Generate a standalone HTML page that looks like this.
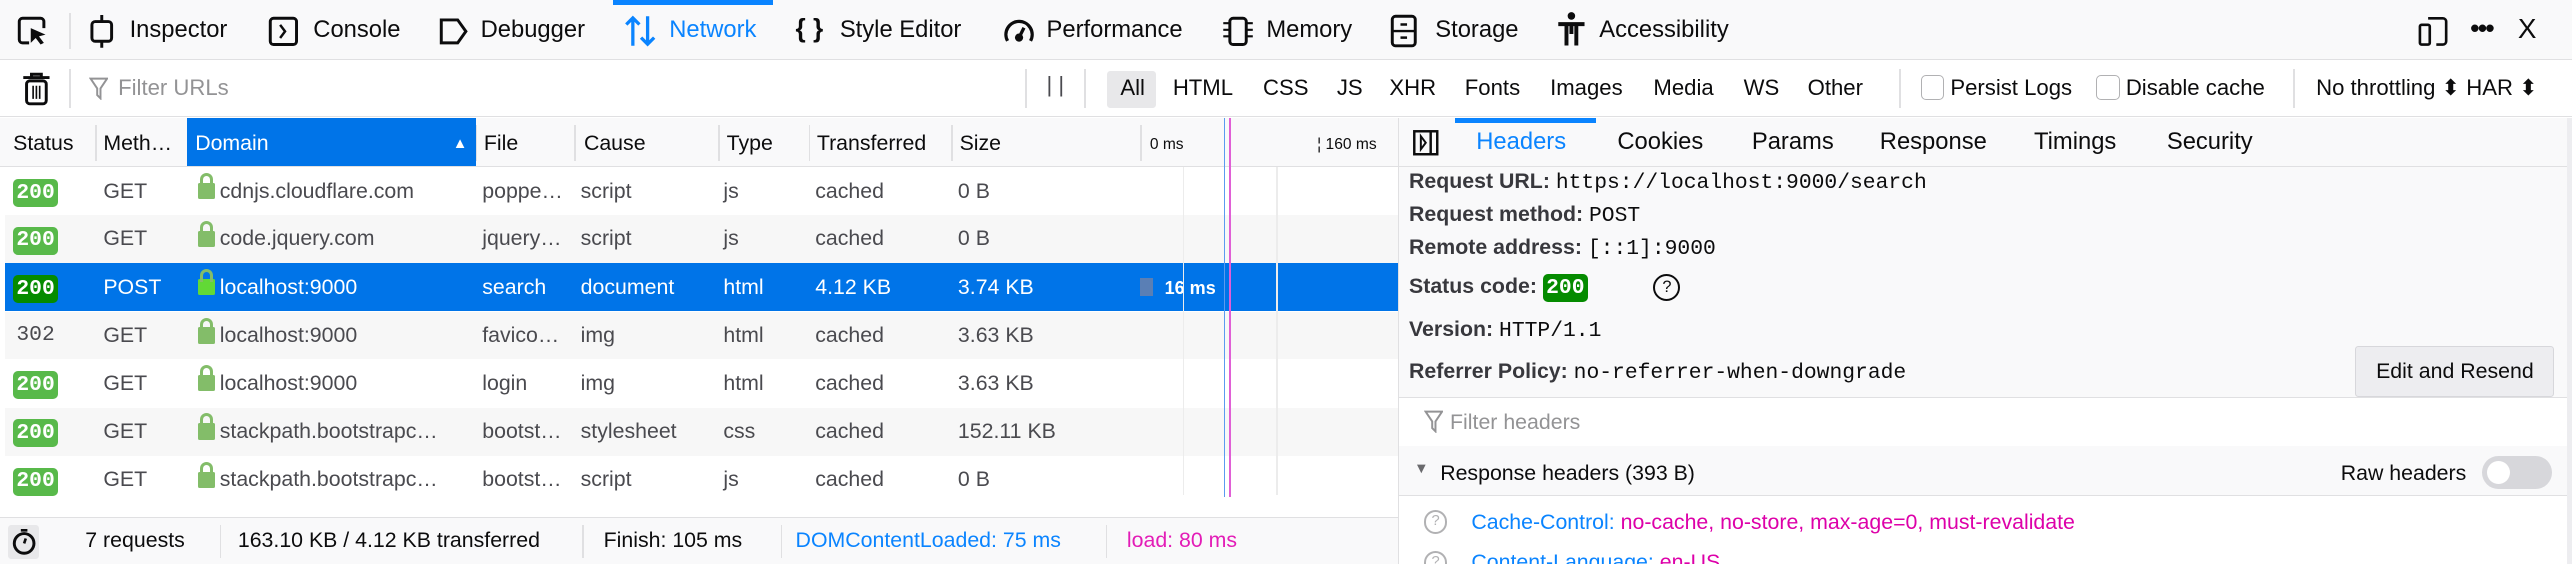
<!DOCTYPE html>
<html><head><meta charset="utf-8"><style>
html,body{margin:0;padding:0;overflow:hidden;background:#fff}
#root{zoom:1.64031;width:1568px;height:344px;position:relative;font-family:"Liberation Sans",sans-serif;font-size:13px;color:#0c0c0d;overflow:hidden}
.a{position:absolute;white-space:nowrap}
.tb{top:0;left:0;width:1568px;height:36px;background:#f9f9fa;border-bottom:1px solid #e0e0e2}
.tab{top:10px;font-size:14.5px;color:#0c0c0d}
.fb{top:37px;left:0;width:1568px;height:34px;background:#fff;border-bottom:1px solid #e0e0e2}
.ft{top:46px;font-size:13.5px}
.hdr{top:72px;left:0;width:852px;height:29px;background:#f9f9fa;border-bottom:1px solid #e0e0e2}
.hc{top:80px;font-size:13px;color:#0c0c0d}
.row{left:3px;width:849px;height:29.4px}
.row span{position:absolute;top:7px;color:#4a4a4f}
.b200{display:inline-block;background:#58b94a;color:#fff;font-family:"Liberation Mono",monospace;font-weight:bold;border-radius:3px;padding:1px 2px;font-size:13px;line-height:15px}
.lock{display:inline-block;width:10px;height:10px;background:#83bd69;border-radius:1px;position:relative;margin-right:3px;top:1px}
.lock:before{content:"";position:absolute;left:1px;top:-6px;width:4px;height:6px;border:2px solid #83bd69;border-bottom:none;border-radius:4px 4px 0 0}
.mono{font-family:"Liberation Mono",monospace}
.rp{left:853px;width:715px}
.lbl{font-weight:bold;color:#38383d}
</style></head><body><div id="root">
<div class="a tb"></div>
<div class="a" style="left:374px;top:0;width:97px;height:3px;background:#0a84ff"></div>
<svg class="a" style="left:10px;top:9px" width="20" height="20" viewBox="0 0 20 20"><path d="M8 17H4a2 2 0 0 1-2-2V4a2 2 0 0 1 2-2h11a2 2 0 0 1 2 2v4" fill="none" stroke="#0c0c0d" stroke-width="1.8"/><path d="M9 8l9 4-4 1 3 4-2 1-3-4-3 3z" fill="#0c0c0d"/></svg>
<div class="a" style="left:42px;top:8px;width:1px;height:22px;background:#e0e0e2"></div>
<svg class="a" style="left:53px;top:9px" width="18" height="20"><rect x="3" y="4" width="12" height="12" rx="2" fill="none" stroke="#0c0c0d" stroke-width="1.8"/><path d="M9 0v4M9 16v4" stroke="#0c0c0d" stroke-width="1.8"/></svg>
<div class="a tab" style="left:79px">Inspector</div>
<svg class="a" style="left:163px;top:9px" width="20" height="20"><rect x="2" y="2" width="16" height="16" rx="2" fill="none" stroke="#0c0c0d" stroke-width="1.8"/><path d="M8 6l3 4-3 4" fill="none" stroke="#0c0c0d" stroke-width="1.5"/></svg>
<div class="a tab" style="left:191px">Console</div>
<svg class="a" style="left:267px;top:9px" width="20" height="20"><path d="M2 3h10l5 7-5 7H2z" fill="none" stroke="#0c0c0d" stroke-width="1.8"/></svg>
<div class="a tab" style="left:293px">Debugger</div>
<svg class="a" style="left:380px;top:8px" width="22" height="22"><path d="M6 20V3M2 7l4-4 4 4M15 2v17M11 15l4 4 4-4" fill="none" stroke="#0a84ff" stroke-width="2"/></svg>
<div class="a tab" style="left:408px;color:#0a84ff">Network</div>
<div class="a tab" style="left:485px;font-weight:bold;font-size:16px;top:8px">{ }</div>
<div class="a tab" style="left:512px">Style Editor</div>
<svg class="a" style="left:610px;top:8px" width="22" height="22"><path d="M4 17A8 8 0 1 1 18 17" fill="none" stroke="#0c0c0d" stroke-width="2"/><circle cx="11" cy="15" r="2.5" fill="#0c0c0d"/><path d="M11 15l3-6" stroke="#0c0c0d" stroke-width="2"/></svg>
<div class="a tab" style="left:638px">Performance</div>
<svg class="a" style="left:744px;top:9px" width="22" height="20"><rect x="6" y="2" width="10" height="16" rx="2" fill="none" stroke="#0c0c0d" stroke-width="1.8"/><path d="M2 5h4M2 9h4M2 13h4M16 5h4M16 9h4M16 13h4" stroke="#0c0c0d" stroke-width="1.3"/></svg>
<div class="a tab" style="left:772px">Memory</div>
<svg class="a" style="left:847px;top:8px" width="18" height="22"><rect x="2" y="2" width="14" height="18" rx="2" fill="none" stroke="#0c0c0d" stroke-width="1.8"/><path d="M2 11h14M7 7h4M7 15h4" stroke="#0c0c0d" stroke-width="1.5"/></svg>
<div class="a tab" style="left:875px">Storage</div>
<svg class="a" style="left:948px;top:7px" width="20" height="22"><circle cx="10" cy="3" r="2.3" fill="#0c0c0d"/><path d="M2 8h16M10 7v7M7 8v13M13 8v13" stroke="#0c0c0d" stroke-width="2.4"/></svg>
<div class="a tab" style="left:975px">Accessibility</div>
<svg class="a" style="left:1472px;top:9px" width="22" height="20"><rect x="3" y="6" width="6" height="12" rx="1" fill="none" stroke="#0c0c0d" stroke-width="1.6"/><path d="M8 2h9a2 2 0 0 1 2 2v12a2 2 0 0 1-2 2h-4" fill="none" stroke="#0c0c0d" stroke-width="1.6"/></svg>
<div class="a" style="left:1506px;top:8px;font-size:16px;font-weight:bold;letter-spacing:-1px">•••</div>
<div class="a" style="left:1535px;top:8px;font-size:17px">X</div>

<div class="a fb"></div>
<svg class="a" style="left:12px;top:43px" width="20" height="22"><path d="M2 4h16M7 4V2h6v2" stroke="#0c0c0d" stroke-width="1.8" fill="none"/><rect x="4" y="6" width="12" height="14" rx="2" fill="none" stroke="#0c0c0d" stroke-width="1.8"/><path d="M8 9v8M10 9v8M12 9v8" stroke="#0c0c0d" stroke-width="1"/></svg>
<div class="a" style="left:42px;top:42px;width:1px;height:24px;background:#e0e0e2"></div>
<svg class="a" style="left:54px;top:47px" width="12" height="14"><path d="M1 1h10L7 7v6L5 11V7z" fill="none" stroke="#939395" stroke-width="1.2"/></svg>
<div class="a ft" style="left:72px;color:#939395">Filter URLs</div>
<div class="a" style="left:625px;top:42px;width:1px;height:24px;background:#e0e0e2"></div>
<div class="a ft" style="left:638px;top:44px;color:#4a4a4f">| |</div>
<div class="a" style="left:661px;top:42px;width:1px;height:24px;background:#e0e0e2"></div>
<div class="a" style="left:675px;top:43px;width:30px;height:23px;background:#e8e8ea;border-radius:2px"></div>
<div class="a ft" style="left:683px">All</div>
<div class="a ft" style="left:715px">HTML</div>
<div class="a ft" style="left:770px">CSS</div>
<div class="a ft" style="left:815px">JS</div>
<div class="a ft" style="left:847px">XHR</div>
<div class="a ft" style="left:893px">Fonts</div>
<div class="a ft" style="left:945px">Images</div>
<div class="a ft" style="left:1008px">Media</div>
<div class="a ft" style="left:1063px">WS</div>
<div class="a ft" style="left:1102px">Other</div>
<div class="a" style="left:1158px;top:42px;width:1px;height:24px;background:#e0e0e2"></div>
<div class="a" style="left:1171px;top:46px;width:13px;height:14px;border:1px solid #b1b1b3;border-radius:3px;background:#fff"></div>
<div class="a ft" style="left:1189px">Persist Logs</div>
<div class="a" style="left:1278px;top:46px;width:13px;height:14px;border:1px solid #b1b1b3;border-radius:3px;background:#fff"></div>
<div class="a ft" style="left:1296px">Disable cache</div>
<div class="a" style="left:1398px;top:42px;width:1px;height:24px;background:#e0e0e2"></div>
<div class="a ft" style="left:1412px">No throttling ⬍ HAR ⬍</div>

<div class="a hdr"></div>
<div class="a" style="left:114px;top:72px;width:176px;height:29px;background:#0074e8"></div>
<div class="a hc" style="left:8px">Status</div>
<div class="a hc" style="left:63px">Meth…</div>
<div class="a hc" style="left:119px;color:#fff">Domain</div>
<div class="a hc" style="left:276px;color:#fff;font-size:9px;top:83px">▲</div>
<div class="a hc" style="left:295px">File</div>
<div class="a hc" style="left:356px">Cause</div>
<div class="a hc" style="left:443px">Type</div>
<div class="a hc" style="left:498px">Transferred</div>
<div class="a hc" style="left:585px">Size</div>
<div class="a hc" style="left:701px;font-size:9.5px;top:83px">0 ms</div>
<div class="a hc" style="left:803px;font-size:9.5px;top:83px">¦ 160 ms</div>
<div class="a" style="left:58px;top:76px;width:1px;height:22px;background:#e0e0e2"></div>
<div class="a" style="left:290px;top:76px;width:1px;height:22px;background:#e0e0e2"></div>
<div class="a" style="left:350px;top:76px;width:1px;height:22px;background:#e0e0e2"></div>
<div class="a" style="left:438px;top:76px;width:1px;height:22px;background:#e0e0e2"></div>
<div class="a" style="left:493px;top:76px;width:1px;height:22px;background:#e0e0e2"></div>
<div class="a" style="left:580px;top:76px;width:1px;height:22px;background:#e0e0e2"></div>
<div class="a" style="left:695px;top:76px;width:1px;height:22px;background:#e0e0e2"></div>

<div class="a row" style="top:102px;background:#fff"><span style="left:5px"><b class="b200">200</b></span><span style="left:60px">GET</span><span style="left:118px"><i class="lock"></i>cdnjs.cloudflare.com</span><span style="left:291px">poppe…</span><span style="left:351px">script</span><span style="left:438px">js</span><span style="left:494px">cached</span><span style="left:581px">0 B</span></div>
<div class="a row" style="top:131px;background:#f7f7f7"><span style="left:5px"><b class="b200">200</b></span><span style="left:60px">GET</span><span style="left:118px"><i class="lock"></i>code.jquery.com</span><span style="left:291px">jquery…</span><span style="left:351px">script</span><span style="left:438px">js</span><span style="left:494px">cached</span><span style="left:581px">0 B</span></div>
<div class="a row" style="top:160.5px;background:#0074e8"><span style="left:5px"><b class="b200" style="background:#058b00">200</b></span><span style="left:60px;color:#fff">POST</span><span style="left:118px;color:#fff"><i class="lock" style="background:#62d936"></i>localhost:9000</span><span style="left:291px;color:#fff">search</span><span style="left:351px;color:#fff">document</span><span style="left:438px;color:#fff">html</span><span style="left:494px;color:#fff">4.12 KB</span><span style="left:581px;color:#fff">3.74 KB</span><span style="left:692px;top:9px;width:8px;height:11px;background:#5a7fb5"></span><span style="left:707px;color:#fff;font-weight:bold;font-size:11px;top:9px">16 ms</span></div>
<div class="a row" style="top:190px;background:#f7f7f7"><span style="left:7px" class="mono">302</span><span style="left:60px">GET</span><span style="left:118px"><i class="lock"></i>localhost:9000</span><span style="left:291px">favico…</span><span style="left:351px">img</span><span style="left:438px">html</span><span style="left:494px">cached</span><span style="left:581px">3.63 KB</span></div>
<div class="a row" style="top:219px;background:#fff"><span style="left:5px"><b class="b200">200</b></span><span style="left:60px">GET</span><span style="left:118px"><i class="lock"></i>localhost:9000</span><span style="left:291px">login</span><span style="left:351px">img</span><span style="left:438px">html</span><span style="left:494px">cached</span><span style="left:581px">3.63 KB</span></div>
<div class="a row" style="top:248.5px;background:#f7f7f7"><span style="left:5px"><b class="b200">200</b></span><span style="left:60px">GET</span><span style="left:118px"><i class="lock"></i>stackpath.bootstrapc…</span><span style="left:291px">bootst…</span><span style="left:351px">stylesheet</span><span style="left:438px">css</span><span style="left:494px">cached</span><span style="left:581px">152.11 KB</span></div>
<div class="a row" style="top:278px;background:#fff"><span style="left:5px"><b class="b200">200</b></span><span style="left:60px">GET</span><span style="left:118px"><i class="lock"></i>stackpath.bootstrapc…</span><span style="left:291px">bootst…</span><span style="left:351px">script</span><span style="left:438px">js</span><span style="left:494px">cached</span><span style="left:581px">0 B</span></div>
<div class="a" style="left:721px;top:102px;width:1px;height:200px;background:#ececec"></div>
<div class="a" style="left:778px;top:102px;width:1px;height:200px;background:#ececec"></div>
<div class="a" style="left:746px;top:72px;width:1px;height:231px;background:#5b9bf0"></div>
<div class="a" style="left:749px;top:72px;width:1.3px;height:231px;background:#e05fd6"></div>

<div class="a" style="left:0;top:315px;width:852px;height:29px;background:#f9f9fa;border-top:1px solid #e0e0e2"></div>
<div class="a" style="left:5px;top:320px;width:19px;height:21px;background:#e8e8ea;border-radius:2px"></div>
<svg class="a" style="left:7px;top:321px" width="16" height="18"><circle cx="8" cy="10" r="6" fill="none" stroke="#0c0c0d" stroke-width="1.8"/><path d="M6 2h4M8 10l1-3" stroke="#0c0c0d" stroke-width="1.6"/></svg>
<div class="a" style="left:52px;top:322px;color:#0c0c0d">7 requests</div>
<div class="a" style="left:134px;top:320px;width:1px;height:20px;background:#e0e0e2"></div>
<div class="a" style="left:145px;top:322px">163.10 KB / 4.12 KB transferred</div>
<div class="a" style="left:355px;top:320px;width:1px;height:20px;background:#e0e0e2"></div>
<div class="a" style="left:368px;top:322px">Finish: 105 ms</div>
<div class="a" style="left:476px;top:320px;width:1px;height:20px;background:#e0e0e2"></div>
<div class="a" style="left:485px;top:322px;color:#0a84ff">DOMContentLoaded: 75 ms</div>
<div class="a" style="left:674px;top:320px;width:1px;height:20px;background:#e0e0e2"></div>
<div class="a" style="left:687px;top:322px;color:#e31db7">load: 80 ms</div>

<div class="a" style="left:852px;top:72px;width:1px;height:272px;background:#e0e0e2"></div>
<div class="a rp" style="top:72px;height:29px;background:#f9f9fa;border-bottom:1px solid #e0e0e2"></div>
<div class="a rp" style="top:102px;height:140px;background:#f9f9fa"></div>
<div class="a" style="left:887px;top:72px;width:86px;height:3px;background:#0a84ff"></div>
<svg class="a" style="left:860px;top:78px" width="18" height="18"><rect x="2" y="2" width="14" height="14" fill="none" stroke="#0c0c0d" stroke-width="1.5"/><path d="M6 5l3 4-3 4z" fill="none" stroke="#0c0c0d" stroke-width="1.2"/><path d="M12 2v14" stroke="#0c0c0d" stroke-width="1.5"/></svg>
<div class="a tab" style="left:900px;top:78px;color:#0a84ff">Headers</div>
<div class="a tab" style="left:986px;top:78px">Cookies</div>
<div class="a tab" style="left:1068px;top:78px">Params</div>
<div class="a tab" style="left:1146px;top:78px">Response</div>
<div class="a tab" style="left:1240px;top:78px">Timings</div>
<div class="a tab" style="left:1321px;top:78px">Security</div>
<div class="a" style="left:859px;top:103px"><span class="lbl">Request URL:</span> <span class="mono">https://localhost:9000/search</span></div>
<div class="a" style="left:859px;top:123px"><span class="lbl">Request method:</span> <span class="mono">POST</span></div>
<div class="a" style="left:859px;top:143px"><span class="lbl">Remote address:</span> <span class="mono">[::1]:9000</span></div>
<div class="a" style="left:859px;top:167px"><span class="lbl">Status code:</span> <b class="b200" style="background:#058b00">200</b></div>
<div class="a" style="left:1008px;top:167px;width:14px;height:14px;border:1.5px solid #0c0c0d;border-radius:50%;font-size:10px;text-align:center;line-height:14px">?</div>
<div class="a" style="left:859px;top:193px"><span class="lbl">Version:</span> <span class="mono">HTTP/1.1</span></div>
<div class="a" style="left:859px;top:219px"><span class="lbl">Referrer Policy:</span> <span class="mono">no-referrer-when-downgrade</span></div>
<div class="a" style="left:1436px;top:211px;width:120px;height:30px;background:#ededf0;border:1px solid #d7d7db;border-radius:2px;text-align:center;line-height:30px">Edit and Resend</div>
<div class="a rp" style="top:242px;height:29px;background:#fff;border-top:1px solid #e0e0e2;border-bottom:1px solid #e0e0e2"></div>
<svg class="a" style="left:868px;top:250px" width="12" height="14"><path d="M1 1h10L7 7v6L5 11V7z" fill="none" stroke="#939395" stroke-width="1.2"/></svg>
<div class="a" style="left:884px;top:250px;color:#939395">Filter headers</div>
<div class="a rp" style="top:272px;height:30px;background:#f9f9fa;border-bottom:1px solid #e0e0e2"></div>
<div class="a" style="left:862px;top:281px;font-size:9px;color:#6a6a6d">▼</div>
<div class="a" style="left:878px;top:281px">Response headers (393 B)</div>
<div class="a" style="left:1427px;top:281px">Raw headers</div>
<div class="a" style="left:1513px;top:278px;width:43px;height:20px;background:#d7d7db;border-radius:10px"></div>
<div class="a" style="left:1516px;top:281px;width:14px;height:14px;background:#fff;border-radius:50%"></div>
<div class="a" style="left:868px;top:311px;width:12px;height:12px;border:1.5px solid #b1b1b3;border-radius:50%;font-size:9px;text-align:center;line-height:12px;color:#b1b1b3">?</div>
<div class="a" style="left:897px;top:311px"><span style="color:#0a84ff">Cache-Control:</span> <span style="color:#dd00a9">no-cache, no-store, max-age=0, must-revalidate</span></div>
<div class="a" style="left:868px;top:336px;width:12px;height:12px;border:1.5px solid #b1b1b3;border-radius:50%;font-size:9px;text-align:center;line-height:12px;color:#b1b1b3">?</div>
<div class="a" style="left:897px;top:335px"><span style="color:#0a84ff">Content-Language:</span> <span style="color:#dd00a9">en-US</span></div>
<div class="a" style="left:1565px;top:72px;width:3px;height:272px;background:#ededf0"></div>
</div></body></html>
